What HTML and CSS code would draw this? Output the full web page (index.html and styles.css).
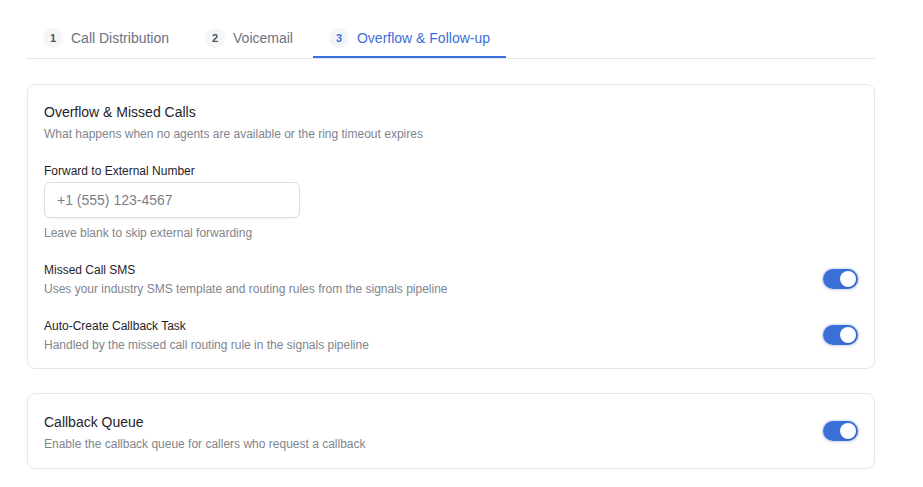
FILE: index.html
```html
<!DOCTYPE html>
<html lang="en">
<head>
<meta charset="utf-8">
<title>Call Settings</title>
<link rel="stylesheet" href="styles.css">
</head>
<body>
<div class="page">
  <nav class="tabs">
    <div class="tab"><span class="num">1</span><span class="tab-label">Call Distribution</span></div>
    <div class="tab"><span class="num">2</span><span class="tab-label">Voicemail</span></div>
    <div class="tab active"><span class="num">3</span><span class="tab-label">Overflow &amp; Follow-up</span></div>
  </nav>

  <section class="card card-main">
    <div class="card-head">
      <h2 class="card-title">Overflow &amp; Missed Calls</h2>
      <p class="card-desc">What happens when no agents are available or the ring timeout expires</p>
    </div>

    <div class="field">
      <label class="label" for="fwd">Forward to External Number</label>
      <input id="fwd" class="input" type="text" placeholder="+1 (555) 123-4567">
      <p class="hint">Leave blank to skip external forwarding</p>
    </div>

    <div class="row">
      <div class="row-text">
        <div class="label">Missed Call SMS</div>
        <p class="row-desc">Uses your industry SMS template and routing rules from the signals pipeline</p>
      </div>
      <span class="switch"><span class="knob"></span></span>
    </div>

    <div class="row">
      <div class="row-text">
        <div class="label">Auto-Create Callback Task</div>
        <p class="row-desc">Handled by the missed call routing rule in the signals pipeline</p>
      </div>
      <span class="switch"><span class="knob"></span></span>
    </div>
  </section>

  <section class="card card-row">
    <div class="row-text">
      <h2 class="card-title">Callback Queue</h2>
      <p class="card-desc">Enable the callback queue for callers who request a callback</p>
    </div>
    <span class="switch"><span class="knob"></span></span>
  </section>
</div>
</body>
</html>
```

FILE: styles.css
```css
* { box-sizing: border-box; }

html, body {
  margin: 0;
  padding: 0;
  background: #ffffff;
  font-family: "Liberation Sans", Arial, Helvetica, sans-serif;
  color: #1f2328;
}

.page {
  width: 875px;
  padding: 18px 0 0 27px;
}

.tabs {
  display: flex;
  gap: 4px;
  border-bottom: 1px solid #e4e6ea;
  margin-left: -1px;
  padding-left: 1px;
}

.tab {
  display: flex;
  align-items: center;
  gap: 8px;
  padding: 10px 16px 8px;
  border-bottom: 2px solid transparent;
  font-size: 14px;
  line-height: 20px;
  color: #6b7280;
}

.num {
  width: 20px;
  height: 20px;
  border-radius: 50%;
  background: #f4f5f7;
  color: #4b5563;
  font-size: 11px;
  font-weight: 700;
  display: flex;
  align-items: center;
  justify-content: center;
}

.tab.active {
  color: #3b6fd8;
  border-bottom-color: #3b6fd8;
}

.tab.active .num {
  color: #3b6fd8;
}

.card {
  margin-top: 25px;
  border: 1px solid #e5e7eb;
  border-radius: 8px;
  background: #ffffff;
  padding: 16px;
}

.card-main {
  padding: 17px 16px 15px;
}

.card + .card {
  margin-top: 24px;
}

.card-title {
  margin: 0;
  font-size: 14px;
  line-height: 20px;
  font-weight: 400;
  color: #1f2328;
}

.card-desc {
  margin: 4px 0 0;
  font-size: 12px;
  line-height: 16px;
  color: #80858d;
}

.field {
  margin-top: 21px;
}

.label {
  display: block;
  font-size: 12px;
  line-height: 16px;
  color: #1f2328;
  font-weight: 400;
}

.field .label { margin-bottom: 3px; }

.input {
  display: block;
  width: 256px;
  height: 36px;
  border: 1px solid #dcdfe4;
  border-radius: 6px;
  box-shadow: 0 1px 2px rgba(0, 0, 0, 0.06);
  padding: 0 12px;
  font-family: inherit;
  font-size: 14px;
  color: #1f2328;
  background: #ffffff;
}

.input::placeholder { color: #7a7f87; }

.hint {
  margin: 7px 0 0;
  font-size: 12px;
  line-height: 16px;
  color: #80858d;
}

.row {
  margin-top: 21px;
  display: flex;
  align-items: center;
  justify-content: space-between;
}

.row-desc {
  margin: 3px 0 0;
  font-size: 12px;
  line-height: 16px;
  color: #80858d;
}

.card-row {
  display: flex;
  align-items: center;
  justify-content: space-between;
  padding: 18px 16px 16px;
}

.switch {
  position: relative;
  flex: none;
  width: 35px;
  height: 20px;
  margin-top: -2px;
  border-radius: 10px;
  background: #3b6fd8;
  box-shadow: 0 0 0 1.5px #dde4f0, 0 3px 6px rgba(0, 0, 0, 0.05);
}

.knob {
  position: absolute;
  top: 2px;
  right: 2px;
  width: 16px;
  height: 16px;
  border-radius: 50%;
  background: #ffffff;
  box-shadow: 0 1px 2px rgba(0, 0, 0, 0.2);
}
```
